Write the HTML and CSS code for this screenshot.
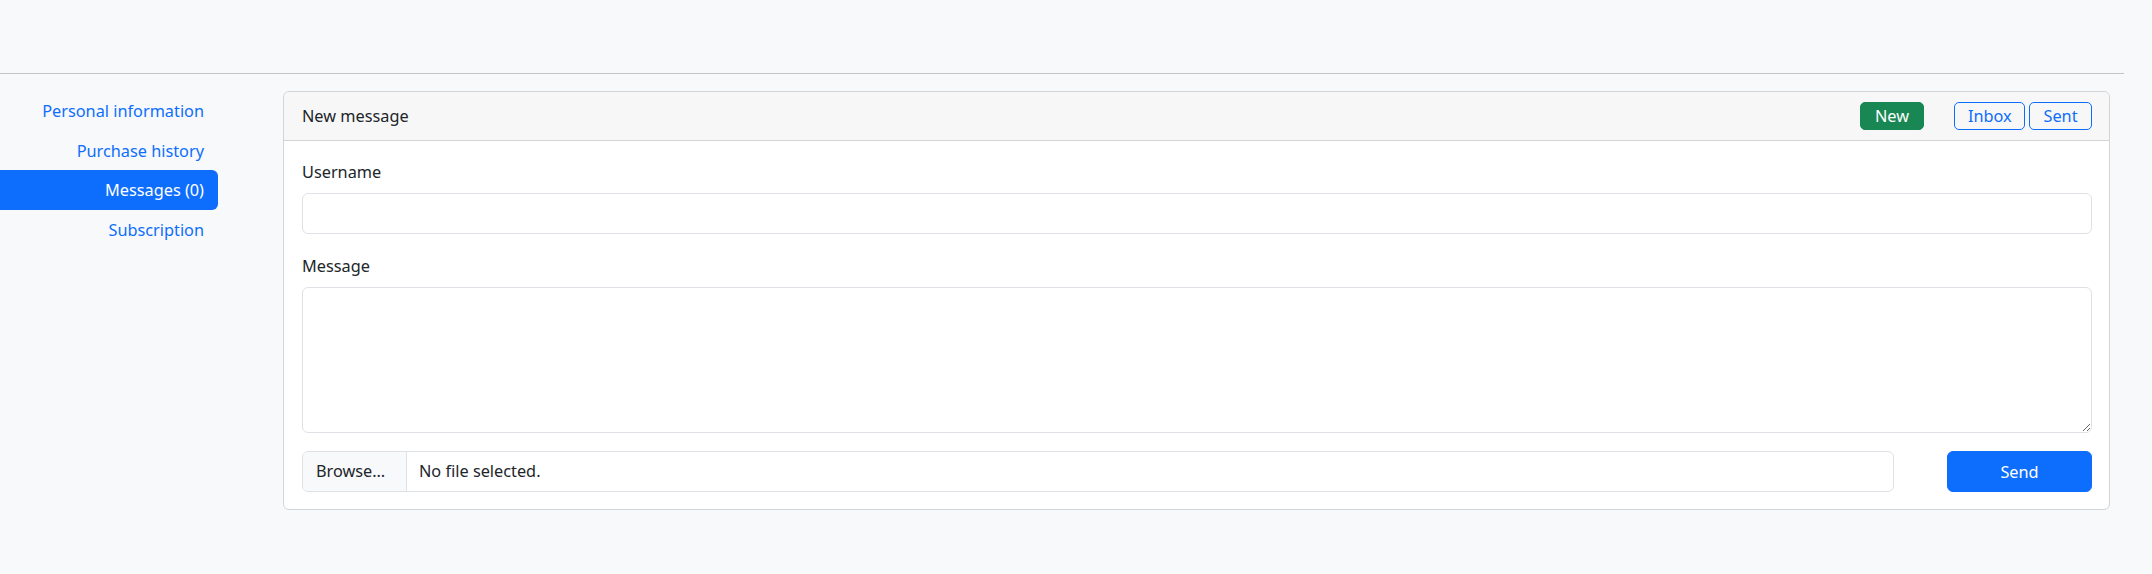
FILE: index.html
```html
<!DOCTYPE html>
<html lang="en">
<head>
<meta charset="utf-8">
<title>New message</title>
<link rel="stylesheet" href="styles.css">
</head>
<body>
<header class="topbar"></header>
<hr class="divider">
<div class="layout">
  <nav class="sidenav">
    <a class="nav-link" href="#">Personal information</a>
    <a class="nav-link" href="#">Purchase history</a>
    <a class="nav-link active" href="#">Messages (0)</a>
    <a class="nav-link" href="#">Subscription</a>
  </nav>
  <main class="content">
    <section class="card">
      <div class="card-header">
        <span class="card-title">New message</span>
        <div class="actions">
          <button class="btn btn-success">New</button>
          <div class="btn-pair">
            <button class="btn btn-outline">Inbox</button>
            <button class="btn btn-outline">Sent</button>
          </div>
        </div>
      </div>
      <div class="card-body">
        <label class="form-label" for="username">Username</label>
        <input class="form-control" id="username" type="text">
        <label class="form-label" for="message">Message</label>
        <textarea class="form-textarea" id="message"></textarea>
        <div class="form-footer">
          <div class="file-input">
            <span class="file-btn">Browse…</span>
            <span class="file-name">No file selected.</span>
          </div>
          <button class="btn btn-primary">Send</button>
        </div>
      </div>
    </section>
  </main>
</div>
</body>
</html>
```

FILE: styles.css
```css
* {
  box-sizing: border-box;
}

html, body {
  margin: 0;
  padding: 0;
}

body {
  background: #f8f9fa;
  color: #212529;
  font-family: "Noto Sans", "Open Sans", sans-serif;
  font-size: 16.3px;
  line-height: 1.5;
  width: 2152px;
  height: 574px;
  overflow: hidden;
}

.topbar {
  height: 73px;
}

.divider {
  margin: 0 28px 0 0;
  border: 0;
  border-top: 1px solid #c3c5c7;
  height: 0;
}

.layout {
  display: flex;
  padding: 17px 42px 0 0;
}

.sidenav {
  width: 218px;
  flex: none;
  display: flex;
  flex-direction: column;
}

.nav-link {
  display: block;
  text-align: right;
  padding: 8px 14px 6px;
  line-height: 25.5px;
  color: #0d6efd;
  text-decoration: none;
  border-radius: 0 6px 6px 0;
}

.nav-link.active {
  background: #0d6efd;
  color: #fff;
}

.content {
  flex: 1;
  margin-left: 65px;
}

.card {
  background: #fff;
  border: 1px solid #d3d4d5;
  border-radius: 6px;
}

.card-header {
  height: 49px;
  display: flex;
  align-items: center;
  justify-content: space-between;
  padding: 0 17px 0 18px;
  background: #f7f7f7;
  border-bottom: 1px solid #d3d4d5;
  border-radius: 6px 6px 0 0;
}

.card-title {
  line-height: 24px;
}

.actions {
  display: flex;
  align-items: center;
  gap: 30px;
}

.btn-pair {
  display: flex;
  gap: 4px;
}

.btn {
  font-family: inherit;
  font-size: 16.3px;
  line-height: 24px;
  padding: 1px 13px;
  border: 1px solid transparent;
  border-radius: 5px;
  cursor: pointer;
}

.btn-success {
  background: #198754;
  border-color: #198754;
  color: #fff;
  width: 64px;
}

.btn-outline {
  background: transparent;
  border-color: #0d6efd;
  color: #0d6efd;
}

.btn-outline:first-child {
  width: 71px;
}

.btn-outline:last-child {
  width: 63px;
}

.card-body {
  padding: 18px 17px 17px 18px;
  display: flex;
  flex-direction: column;
}

.form-label {
  display: block;
  line-height: 26px;
  margin-bottom: 8px;
}

.form-control {
  height: 41px;
  border: 1px solid #dee2e6;
  border-radius: 6px;
  margin: 0 0 19px;
  font: inherit;
  padding: 6px 12px;
  background: #fff;
}

.form-textarea {
  height: 146px;
  border: 1px solid #dee2e6;
  border-radius: 6px;
  margin: 0 0 18px;
  font: inherit;
  padding: 6px 12px;
  resize: vertical;
  background: #fff;
}

.form-footer {
  display: flex;
  gap: 53px;
  height: 41px;
}

.file-input {
  flex: 1;
  display: flex;
  border: 1px solid #dee2e6;
  border-radius: 6px;
  overflow: hidden;
  background: #fff;
}

.file-btn {
  width: 104px;
  flex: none;
  background: #f8f9fa;
  border-right: 1px solid #dee2e6;
  padding: 0 0 0 13px;
  display: flex;
  align-items: center;
}

.file-name {
  display: flex;
  align-items: center;
  padding-left: 12px;
}

.btn-primary {
  width: 145px;
  height: 41px;
  background: #0d6efd;
  border-color: #0d6efd;
  color: #fff;
  border-radius: 6px;
}
```
